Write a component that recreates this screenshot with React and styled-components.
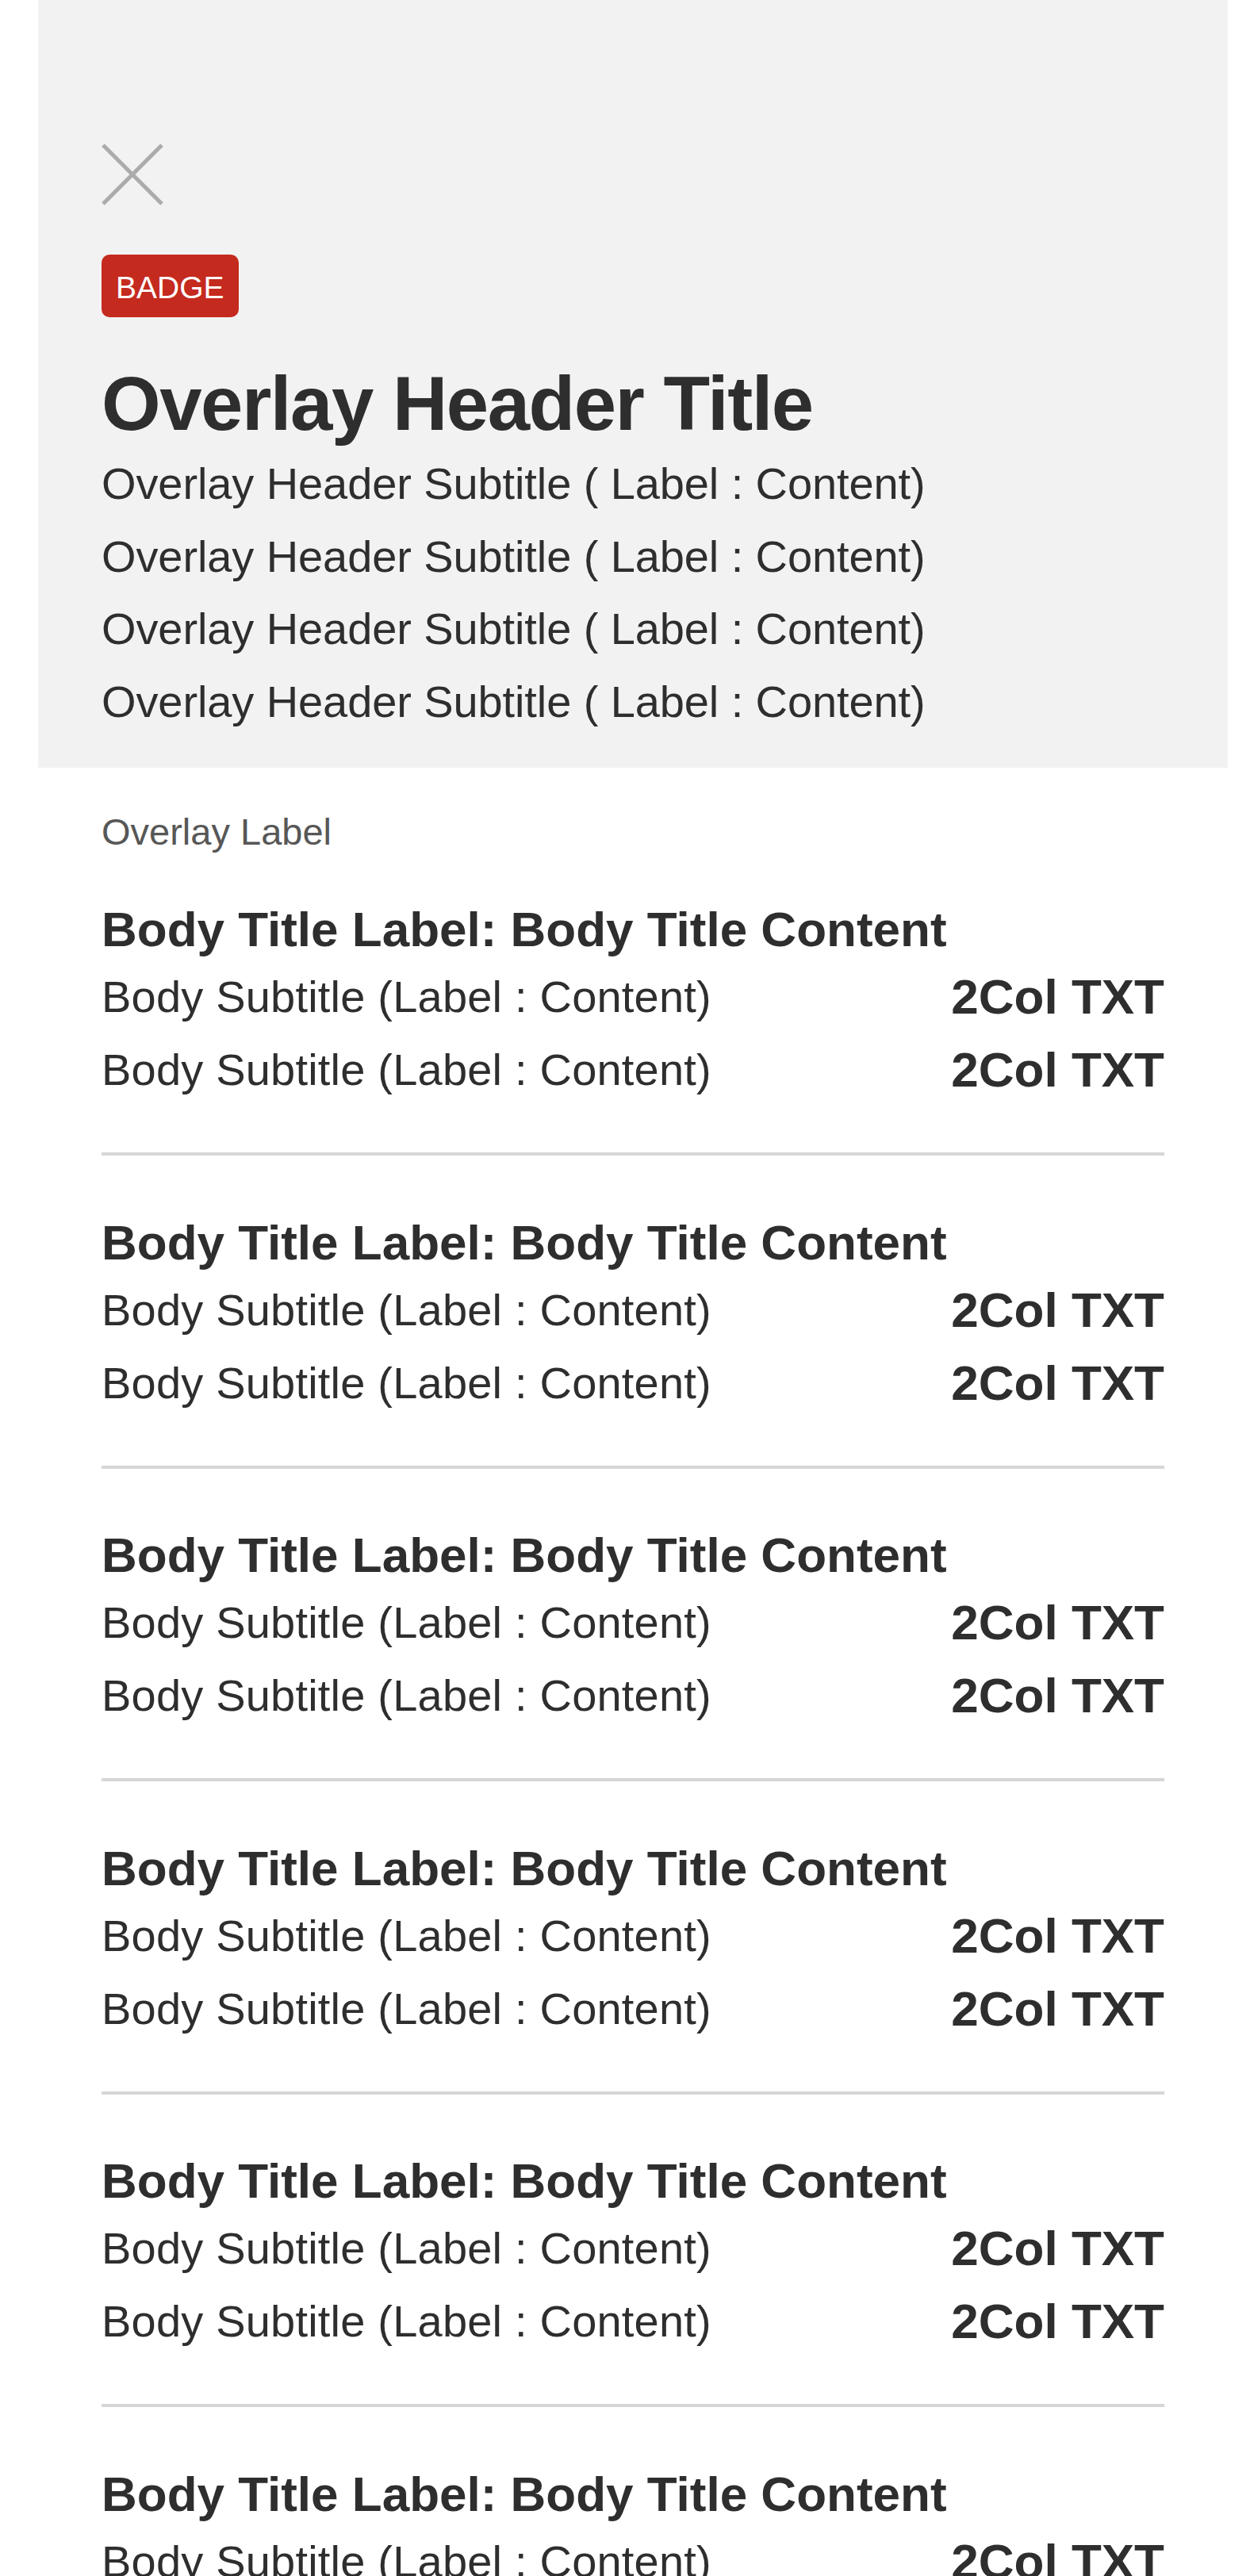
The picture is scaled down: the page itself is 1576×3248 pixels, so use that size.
import { createGlobalStyle, styled } from "styled-components";

const GlobalStyle = createGlobalStyle`
  body {
    margin: 0;
    background: #fff;
    font-family: "Liberation Sans", Arial, Helvetica, sans-serif;
    color: #2e2e2e;
  }
`;

const Page = styled.div`
  width: 1500px;
  margin-left: 48px;
`;

const Header = styled.header`
  background: #f2f2f2;
  padding: 181px 80px 38px;
  display: flex;
  flex-direction: column;
  align-items: flex-start;
`;

const CloseButton = styled.button`
  width: 78px;
  height: 78px;
  padding: 0;
  border: 0;
  background: none;
  cursor: pointer;
  svg {
    display: block;
  }
`;

const Badge = styled.span`
  margin-top: 62px;
  height: 79px;
  box-sizing: border-box;
  padding: 4px 18px 0;
  border-radius: 10px;
  background: #c52a1e;
  color: #fff;
  font-size: 39px;
  line-height: 75px;
`;

const HeaderTitle = styled.h1`
  margin: 54px 0 0;
  font-size: 96px;
  font-weight: bold;
  line-height: 110px;
  letter-spacing: -1.5px;
`;

const HeaderSubtitle = styled.p`
  margin: 0;
  font-size: 56px;
  line-height: 91.5px;
  letter-spacing: -0.1px;
`;

const Body = styled.main`
  padding: 0 80px;
`;

const OverlayLabel = styled.div`
  margin-top: 53px;
  font-size: 47px;
  line-height: 56px;
  color: #575757;
`;

const Section = styled.section`
  padding: ${(p) => (p.$first ? "59px" : "73.5px")} 0 58px;
`;

const SectionTitle = styled.h2`
  margin: 0 0 3px;
  font-size: 62px;
  font-weight: bold;
  line-height: 72px;
`;

const Row = styled.div`
  display: flex;
  justify-content: space-between;
  align-items: flex-start;
  line-height: 92px;
`;

const RowLabel = styled.span`
  font-size: 56px;
  letter-spacing: 0.2px;
`;

const RowValue = styled.span`
  font-size: 62px;
  font-weight: bold;
`;

const Divider = styled.hr`
  margin: 0;
  border: 0;
  height: 4px;
  background: #d6d6d6;
`;

const sections = Array.from({ length: 6 }, (_, i) => ({
  id: i,
  title: "Body Title Label: Body Title Content",
  rows: [
    { label: "Body Subtitle (Label : Content)", value: "2Col TXT" },
    { label: "Body Subtitle (Label : Content)", value: "2Col TXT" },
  ],
}));

export default function App() {
  return (
    <>
      <GlobalStyle />
      <Page>
        <Header>
          <CloseButton aria-label="Close">
            <svg width="78" height="78" viewBox="0 0 78 78">
              <path d="M2 2 L76 76 M76 2 L2 76" stroke="#ababab" strokeWidth="5" fill="none" />
            </svg>
          </CloseButton>
          <Badge>BADGE</Badge>
          <HeaderTitle>Overlay Header Title</HeaderTitle>
          <HeaderSubtitle>Overlay Header Subtitle ( Label : Content)</HeaderSubtitle>
          <HeaderSubtitle>Overlay Header Subtitle ( Label : Content)</HeaderSubtitle>
          <HeaderSubtitle>Overlay Header Subtitle ( Label : Content)</HeaderSubtitle>
          <HeaderSubtitle>Overlay Header Subtitle ( Label : Content)</HeaderSubtitle>
        </Header>
        <Body>
          <OverlayLabel>Overlay Label</OverlayLabel>
          {sections.map((s, i) => (
            <div key={s.id}>
              {i > 0 && <Divider />}
              <Section $first={i === 0}>
                <SectionTitle>{s.title}</SectionTitle>
                {s.rows.map((r, j) => (
                  <Row key={j}>
                    <RowLabel>{r.label}</RowLabel>
                    <RowValue>{r.value}</RowValue>
                  </Row>
                ))}
              </Section>
            </div>
          ))}
        </Body>
      </Page>
    </>
  );
}
